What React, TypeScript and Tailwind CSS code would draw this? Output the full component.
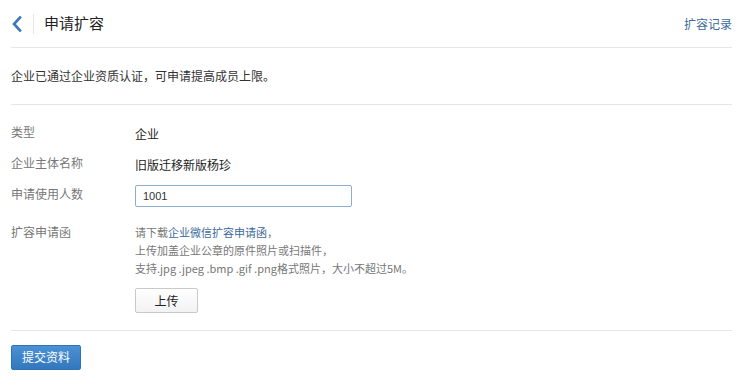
const font = { fontFamily: '"Noto Sans CJK SC", "Noto Sans", sans-serif' };

function Row({ label, children, className = "" }: { label: string; children: React.ReactNode; className?: string }) {
  return (
    <div className={`flex ${className}`}>
      <div className="w-[124px] shrink-0 text-[12px] text-[#777]">{label}</div>
      <div className="flex-1">{children}</div>
    </div>
  );
}

export default function App() {
  return (
    <div className="h-[386px] w-[743px] bg-white px-[11px] text-[#333]" style={font}>
      <div className="flex h-[48px] items-center border-b border-[#e4e8ee]">
        <button className="flex h-[20px] w-[22px] items-center text-[#3b78b8]">
          <svg width="12" height="16" viewBox="0 0 12 16" fill="none">
            <path d="M9 1.5 L3 8 L9 14.5" stroke="currentColor" strokeWidth="2.6" strokeLinecap="square" />
          </svg>
        </button>
        <span className="h-[20px] w-px bg-[#e6e6e6]" />
        <h1 className="ml-[10px] text-[15px] text-[#222]">申请扩容</h1>
        <a className="ml-auto text-[12px] text-[#3c6a9b]">扩容记录</a>
      </div>

      <div className="flex h-[57px] items-center border-b border-[#e6e6e6] text-[12px] text-[#333]">
        企业已通过企业资质认证，可申请提高成员上限。
      </div>

      <div className="border-b border-[#e6e6e6] pt-[17px] pb-[17px]">
        <Row label="类型" className="h-[20px] items-center">
          <span className="text-[12px] text-[#222]">企业</span>
        </Row>
        <Row label="企业主体名称" className="mt-[11px] h-[20px] items-center">
          <span className="text-[12px] text-[#222]">旧版迁移新版杨珍</span>
        </Row>
        <Row label="申请使用人数" className="mt-[10px] h-[22px] items-center">
          <input
            defaultValue="1001"
            className="h-[22px] w-[217px] rounded-[2px] border border-[#8eaed0] px-[7px] text-[11px] text-[#333] outline-none"
            style={{ fontFamily: '"Liberation Sans", Arial, sans-serif' }}
          />
        </Row>
        <Row label="扩容申请函" className="mt-[18px]">
          <div className="text-[11px] leading-[18px] text-[#777]">
            <p>
              请下载<a className="text-[#3c6a9b]">企业微信扩容申请函</a>，
            </p>
            <p>上传加盖企业公章的原件照片或扫描件，</p>
            <p>支持.jpg .jpeg .bmp .gif .png格式照片，大小不超过5M。</p>
            <button className="mt-[11px] h-[25px] w-[63px] rounded-[2px] border border-[#c9c9c9] bg-gradient-to-b from-white to-[#f2f2f2] text-[12px] text-[#222]">
              上传
            </button>
          </div>
        </Row>
      </div>

      <div className="pt-[12px]">
        <button className="h-[25px] w-[70px] rounded-[2px] border border-[#2f74b5] bg-gradient-to-b from-[#4b91d4] to-[#3377bd] text-[12px] text-white">
          提交资料
        </button>
      </div>
    </div>
  );
}
